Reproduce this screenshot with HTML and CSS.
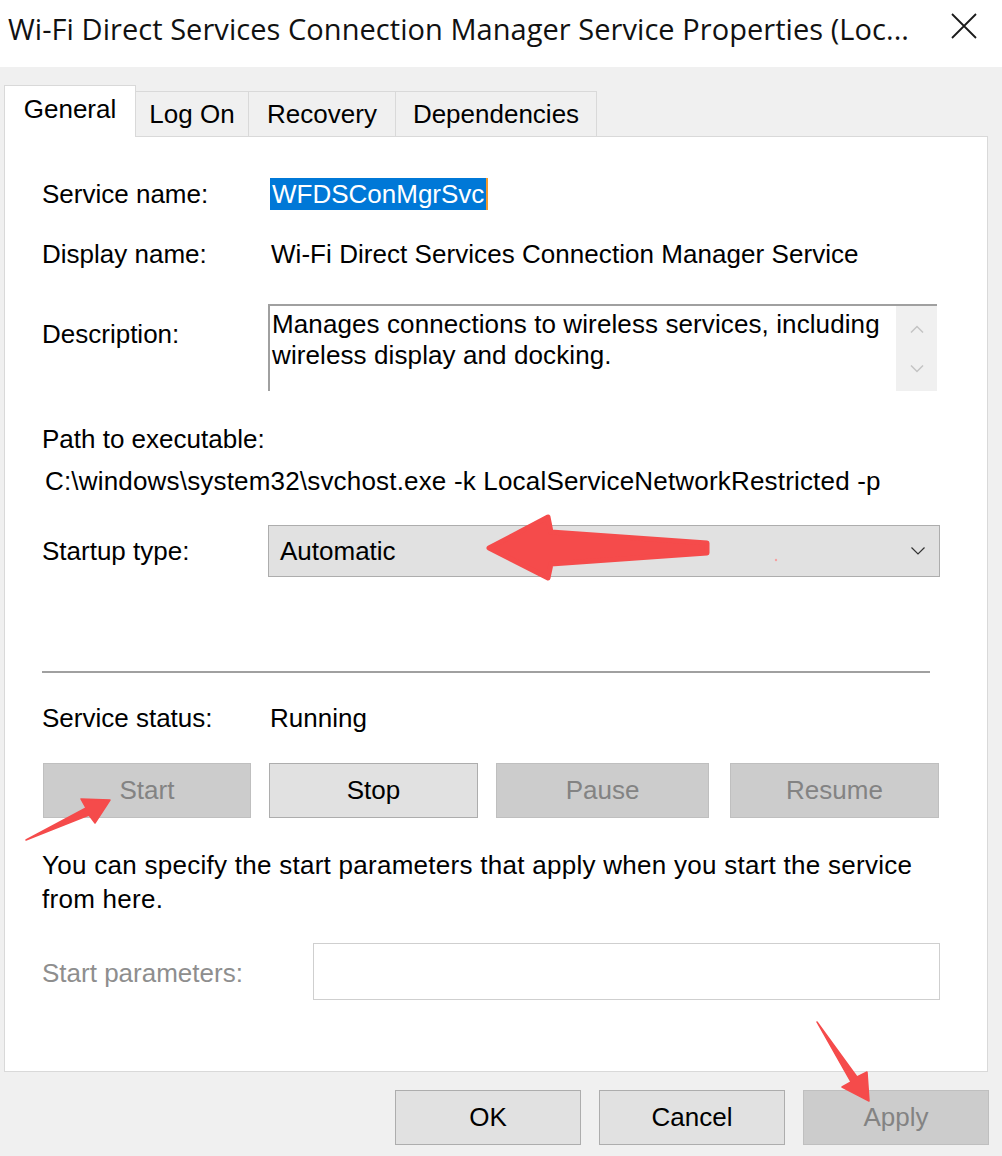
FILE: index.html
```html
<!DOCTYPE html>
<html lang="en">
<head>
<meta charset="utf-8">
<title>Service Properties</title>
<link rel="stylesheet" href="styles.css">
</head>
<body>
<div class="titlebar">
  <div class="title">Wi-Fi Direct Services Connection Manager Service Properties (Loc...</div>
  <svg class="close" width="26" height="26" viewBox="0 0 26 26"><path d="M1 1 L25 25 M25 1 L1 25" stroke="#1a1a1a" stroke-width="1.8" fill="none"/></svg>
</div>

<div class="tabs">
  <div class="tab tab-active">General</div>
  <div class="tab tab-logon">Log On</div>
  <div class="tab tab-recovery">Recovery</div>
  <div class="tab tab-deps">Dependencies</div>
</div>

<div class="panel">
  <div class="row row-service">
    <div class="label">Service name:</div>
    <div class="sel">WFDSConMgrSvc</div>
  </div>
  <div class="row row-display">
    <div class="label">Display name:</div>
    <div class="value">Wi-Fi Direct Services Connection Manager Service</div>
  </div>
  <div class="row row-desc">
    <div class="label label-desc">Description:</div>
    <div class="desc">
      <div class="desc-text">Manages connections to wireless services, including wireless display and docking.</div>
      <div class="scroll">
        <svg class="chev-up" width="14" height="8" viewBox="0 0 14 8"><polyline points="1,7.5 7,1.5 13,7.5" fill="none" stroke="#c4c4c4" stroke-width="1.5"/></svg>
        <svg class="chev-down" width="14" height="8" viewBox="0 0 14 8"><polyline points="1,0.5 7,6.5 13,0.5" fill="none" stroke="#c4c4c4" stroke-width="1.5"/></svg>
      </div>
    </div>
  </div>
  <div class="path-label">Path to executable:</div>
  <div class="path-value">C:\windows\system32\svchost.exe -k LocalServiceNetworkRestricted -p</div>
  <div class="row row-startup">
    <div class="label">Startup type:</div>
    <div class="select">
      <span>Automatic</span>
      <svg class="select-chev" width="14" height="8" viewBox="0 0 14 8"><polyline points="0.5,0.5 7,7 13.5,0.5" fill="none" stroke="#333" stroke-width="1.2"/></svg>
    </div>
  </div>
  <div class="separator"></div>
  <div class="row row-status">
    <div class="label">Service status:</div>
    <div class="value-status">Running</div>
  </div>
  <div class="buttons">
    <div class="btn btn-dis btn-start">Start</div>
    <div class="btn btn-stop">Stop</div>
    <div class="btn btn-dis btn-pause">Pause</div>
    <div class="btn btn-dis btn-resume">Resume</div>
  </div>
  <p class="note">You can specify the start parameters that apply when you start the service from here.</p>
  <div class="params">
    <div class="params-label">Start parameters:</div>
    <div class="params-input"></div>
  </div>
</div>

<div class="footer">
  <div class="btn fbtn">OK</div>
  <div class="btn fbtn">Cancel</div>
  <div class="btn fbtn btn-dis">Apply</div>
</div>

<svg class="annot" width="1002" height="1156" viewBox="0 0 1002 1156">
  <g fill="#f54b4b" stroke="#f54b4b" stroke-linejoin="round">
    <polygon stroke-width="5" points="489,548 548,517 551,532 707,543 707,553 551,564 548,578"/>
    <polygon stroke-width="1.5" points="26,840 86,808 81,799 110,800 95,823 89,815"/>
    <polygon stroke-width="1.5" points="817,1022 857,1077 867,1072 869,1101 842,1087 851,1082"/>
    <circle cx="776" cy="560" r="1.2" fill="#f5a0a0" stroke="none"/>
  </g>
</svg>
</body>
</html>
```

FILE: styles.css
```css
* { box-sizing: border-box; margin: 0; padding: 0; }
html, body { width: 1002px; height: 1156px; overflow: hidden; }
body {
  background: #f0f0f0;
  font-family: "Liberation Sans", Arial, sans-serif;
  font-size: 26px;
  color: #000;
  position: relative;
}

/* title bar */
.titlebar {
  height: 67px;
  background: #fff;
  display: flex;
  align-items: flex-start;
  padding-left: 8px;
}
.title {
  font-family: "Open Sans", "Liberation Sans", sans-serif;
  font-size: 29px;
  letter-spacing: 0.05px;
  line-height: 32px;
  margin-top: 13px;
  white-space: nowrap;
  color: #111;
}
.close { margin-left: auto; margin-right: 25px; margin-top: 13px; flex: none; }

/* tabs */
.tabs {
  display: flex;
  align-items: flex-end;
  height: 52px;
  margin: 18px 0 -1px 4px;
  position: relative;
  z-index: 1;
}
.tab {
  height: 45px;
  margin-bottom: 1px;
  border-top: 1px solid #d9d9d9;
  border-right: 1px solid #d9d9d9;
  background: #f0f0f0;
  line-height: 32px;
  padding-top: 6px;
  text-align: center;
  white-space: nowrap;
}
.tab-active {
  height: 52px;
  margin-bottom: 0;
  width: 132px;
  border-left: 1px solid #d9d9d9;
  background: #fff;
  padding-top: 7px;
}
.tab-logon { width: 113px; }
.tab-recovery { width: 147px; }
.tab-deps { width: 201px; }

/* panel */
.panel {
  margin-left: 4px;
  width: 984px;
  height: 936px;
  background: #fff;
  border: 1px solid #d9d9d9;
  padding-left: 37px;
}
.row { display: flex; align-items: center; }
.label { width: 226px; flex: none; line-height: 32px; white-space: nowrap; }

.row-service { margin-top: 41px; height: 32px; }
.sel {
  margin-left: 2px;
  height: 32px;
  line-height: 32px;
  padding: 0 2px;
  background: #0078d7;
  color: #fff;
  border-right: 2px solid #f39a2c;
}

.row-display { margin-top: 28px; height: 32px; }
.value { padding-left: 3px; line-height: 32px; white-space: nowrap; letter-spacing: 0.05px; }

.row-desc { margin-top: 34px; align-items: flex-start; }
.label-desc { margin-top: 14px; }
.desc {
  width: 669px;
  height: 87px;
  border-top: 2px solid #a0a0a0;
  border-left: 2px solid #a0a0a0;
  display: flex;
}
.desc-text { flex: 1; padding: 3px 4px 0 2px; line-height: 31px; letter-spacing: 0.1px; }
.scroll {
  width: 41px;
  flex: none;
  background: #f0f0f0;
  display: flex;
  flex-direction: column;
  align-items: center;
}
.chev-up { margin-top: 19px; }
.chev-down { margin-top: 32px; }

.path-label { margin-top: 32px; line-height: 32px; }
.path-value { margin-top: 10px; line-height: 32px; padding-left: 3px; white-space: nowrap; letter-spacing: 0.18px; }

.row-startup { margin-top: 28px; height: 52px; }
.select {
  width: 672px;
  height: 52px;
  background: #e1e1e1;
  border: 1px solid #adadad;
  display: flex;
  align-items: center;
  padding: 0 14px 0 11px;
}
.select-chev { margin-left: auto; }

.separator { margin-top: 94px; width: 888px; height: 2px; background: #a0a0a0; }

.row-status { margin-top: 29px; height: 32px; }
.value-status { padding-left: 2px; line-height: 32px; }

.buttons { display: flex; margin-top: 29px; margin-left: 1px; }
.btn {
  height: 55px;
  border: 1px solid #adadad;
  background: #e1e1e1;
  display: flex;
  align-items: center;
  justify-content: center;
  line-height: 29px;
}
.btn-dis { background: #cccccc; border-color: #bfbfbf; color: #838383; }
.btn-start { width: 208px; }
.btn-stop { width: 209px; margin-left: 18px; }
.btn-pause { width: 213px; margin-left: 18px; }
.btn-resume { width: 209px; margin-left: 21px; }

.note { margin-top: 30px; width: 898px; line-height: 34px; letter-spacing: 0.27px; }

.params { display: flex; align-items: center; margin-top: 27px; width: 898px; height: 57px; }
.params-label { color: #8e8e8e; text-shadow: 1px 1px 0 #fff; line-height: 32px; padding-top: 2px; }
.params-input {
  margin-left: auto;
  width: 627px;
  height: 57px;
  background: #fff;
  border: 1px solid #cfcfcf;
}

/* footer */
.footer {
  display: flex;
  justify-content: flex-end;
  gap: 18px;
  padding-right: 13px;
  margin-top: 18px;
}
.fbtn { width: 186px; }

/* annotations overlay */
.annot { position: absolute; left: 0; top: 0; pointer-events: none; }
```
